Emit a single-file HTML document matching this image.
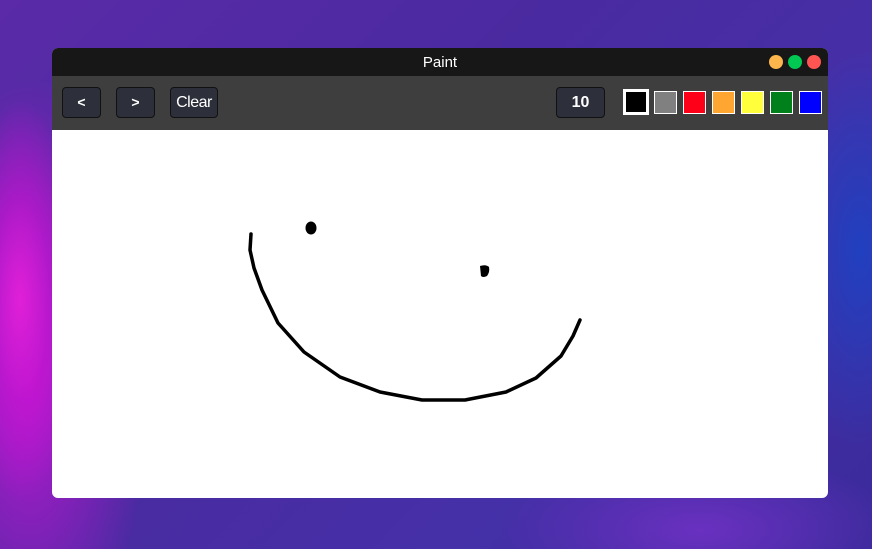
<!DOCTYPE html>
<html><head><style>
html,body{margin:0;padding:0;width:872px;height:549px;overflow:hidden}
body{position:relative;font-family:"Liberation Sans",sans-serif;
background:
radial-gradient(ellipse 60px 200px at 20px 300px,#e020d8 0%,rgba(200,20,210,0.6) 50%,rgba(0,0,0,0) 100%),
radial-gradient(ellipse 120px 300px at 30px 380px,#b818d0 0%,rgba(150,20,200,0) 100%),
radial-gradient(ellipse 80px 200px at 860px 250px,#2040c0 0%,rgba(30,50,180,0) 100%),
radial-gradient(ellipse 200px 80px at 700px 530px,#6a30c0 0%,rgba(0,0,0,0) 100%),
linear-gradient(135deg,#5a2aa8 0%,#4a2aa0 40%,#4530a8 70%,#3a2a9a 100%);}
.win{position:absolute;left:52px;top:48px;width:776px;height:450px;border-radius:6px;overflow:hidden;background:#fff}
.title{height:28px;background:#171717;color:#fff;text-align:center;font-size:15px;line-height:28px;padding-top:0;position:relative}
.dot{position:absolute;top:7px;width:14px;height:14px;border-radius:50%}
.tool{height:54px;background:#3e3e3e;position:relative}
.btn{position:absolute;top:11px;height:29px;background:#2d2f3a;border:1px solid #111;border-radius:4px;color:#fff;text-align:center;line-height:29px;font-size:14px;box-sizing:content-box}
.sw{position:absolute;top:15px;width:21px;height:21px;border:1px solid #fff}
</style></head><body>
<div class="win">
<div class="title"><span style="position:relative;top:1px">Paint</span>
<div class="dot" style="left:717px;background:#fdb54c"></div>
<div class="dot" style="left:736px;background:#00c853"></div>
<div class="dot" style="left:755px;background:#fe5552"></div>
</div>
<div class="tool">
<div class="btn" style="left:10px;width:37px;font-weight:bold">&lt;</div>
<div class="btn" style="left:64px;width:37px;font-weight:bold">&gt;</div>
<div class="btn" style="left:118px;width:46px;font-size:16px;letter-spacing:-0.5px">Clear</div>
<div class="btn" style="left:504px;width:47px;font-weight:bold;font-size:16px">10</div>
<div class="sw" style="left:571px;top:13px;width:20px;height:20px;border:3px solid #fff;background:#000"></div>
<div class="sw" style="left:602px;background:#808080"></div>
<div class="sw" style="left:631px;background:#ff0019"></div>
<div class="sw" style="left:660px;background:#ffa531"></div>
<div class="sw" style="left:689px;background:#ffff3c"></div>
<div class="sw" style="left:718px;background:#00801b"></div>
<div class="sw" style="left:747px;background:#0000ff"></div>
</div>
</div>
<svg style="position:absolute;left:0;top:0" width="872" height="549">
<polyline fill="none" stroke="#000" stroke-width="3.5" stroke-linejoin="round" stroke-linecap="round"
points="251,234 250,250 254,268 262,290 278,323 304,352 340,377 380,392 422,400 465,400 506,392 536,378 561,356 573,336 580,320"/>
<ellipse cx="311" cy="228" rx="5.5" ry="6.5" fill="#000"/>
<path d="M480 266 Q486 264 489 267 Q490 272 487 276 Q483 278 481 276 Z" fill="#000"/>
</svg>
</body></html>
